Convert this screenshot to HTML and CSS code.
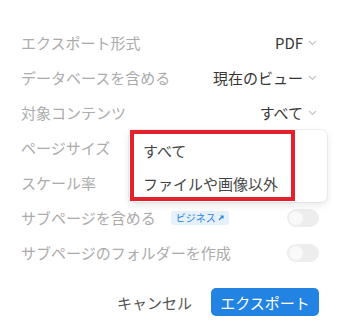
FILE: index.html
```html
<!DOCTYPE html>
<html lang="ja">
<head>
<meta charset="utf-8">
<link rel="stylesheet" href="styles.css">
</head>
<body>
<div class="panel">
  <div class="row">
    <span class="label">エクスポート形式</span>
    <span class="value">PDF<svg class="chev" width="9" height="6" viewBox="0 0 9 6"><polyline points="1,1 4.5,4.5 8,1" fill="none" stroke="#c4c4c4" stroke-width="1.1"/></svg></span>
  </div>
  <div class="row">
    <span class="label">データベースを含める</span>
    <span class="value">現在のビュー<svg class="chev" width="9" height="6" viewBox="0 0 9 6"><polyline points="1,1 4.5,4.5 8,1" fill="none" stroke="#c4c4c4" stroke-width="1.1"/></svg></span>
  </div>
  <div class="row anchor">
    <span class="label">対象コンテンツ</span>
    <span class="value">すべて<svg class="chev" width="9" height="6" viewBox="0 0 9 6"><polyline points="1,1 4.5,4.5 8,1" fill="none" stroke="#c4c4c4" stroke-width="1.1"/></svg></span>
    <div class="menu">
      <div class="item">すべて</div>
      <div class="item">ファイルや画像以外</div>
      <div class="highlight"></div>
    </div>
  </div>
  <div class="row">
    <span class="label">ページサイズ</span>
  </div>
  <div class="row">
    <span class="label">スケール率</span>
  </div>
  <div class="row">
    <span class="label">サブページを含める<span class="badge">ビジネス<svg width="6" height="6" viewBox="0 0 6 6"><path d="M1 5 L5 1 M2.5 1 H5 V3.5" fill="none" stroke="#2383e2" stroke-width="1.1"/></svg></span></span>
    <span class="toggle"><span class="knob"></span></span>
  </div>
  <div class="row">
    <span class="label">サブページのフォルダーを作成</span>
    <span class="toggle"><span class="knob"></span></span>
  </div>
  <div class="footer">
    <button class="btn cancel">キャンセル</button>
    <button class="btn primary">エクスポート</button>
  </div>
</div>
</body>
</html>
```
FILE: styles.css
```css
html, body {
  margin: 0;
  padding: 0;
  background: #ffffff;
}
body {
  font-family: "Noto Sans CJK JP", "Noto Sans", sans-serif;
  font-size: 15px;
}
.panel {
  padding: 25px 20px 0 21px;
}
.row {
  height: 35px;
  display: flex;
  align-items: center;
  justify-content: space-between;
}
.anchor {
  position: relative;
}
.label {
  color: #ababab;
  display: flex;
  align-items: center;
  white-space: nowrap;
}
.value {
  color: #373737;
  display: flex;
  align-items: center;
  margin-right: 3px;
}
.chev {
  margin-left: 5px;
  margin-top: 1px;
}
.badge {
  display: inline-flex;
  align-items: center;
  gap: 2px;
  margin-left: 15px;
  height: 14px;
  padding: 0 5px;
  border-radius: 3px;
  background: #e7f1fb;
  color: #2383e2;
  font-size: 10px;
  line-height: 14px;
}
.toggle {
  width: 32px;
  height: 18px;
  border-radius: 9px;
  background: #ededed;
  display: flex;
  align-items: center;
  padding: 0 2px;
  box-sizing: border-box;
  margin-right: 1px;
}
.knob {
  width: 14px;
  height: 14px;
  border-radius: 50%;
  background: #f9f9f9;
}
.menu {
  position: absolute;
  top: 100%;
  left: 108px;
  width: 198px;
  height: 72px;
  box-sizing: border-box;
  padding-top: 4px;
  background: #ffffff;
  border-radius: 6px;
  box-shadow: 0 0 0 1px rgba(15, 15, 15, 0.05), 0 3px 8px rgba(15, 15, 15, 0.1);
  z-index: 2;
}
.item {
  height: 33px;
  display: flex;
  align-items: center;
  padding-left: 14px;
  color: #444444;
}
.highlight {
  position: absolute;
  left: 1px;
  top: 0;
  width: 165px;
  height: 71px;
  box-sizing: border-box;
  border: 4px solid #e3202b;
}
.footer {
  display: flex;
  justify-content: flex-end;
  align-items: center;
  gap: 11px;
  margin-top: 18px;
  margin-right: 1px;
}
.btn {
  font-family: inherit;
  font-size: 15px;
  border: none;
  height: 28px;
  padding: 0 8px;
  border-radius: 5px;
  background: transparent;
  cursor: pointer;
}
.cancel {
  color: #555555;
}
.primary {
  width: 108px;
  padding: 0;
  background: #2383e2;
  color: #ffffff;
}
```
